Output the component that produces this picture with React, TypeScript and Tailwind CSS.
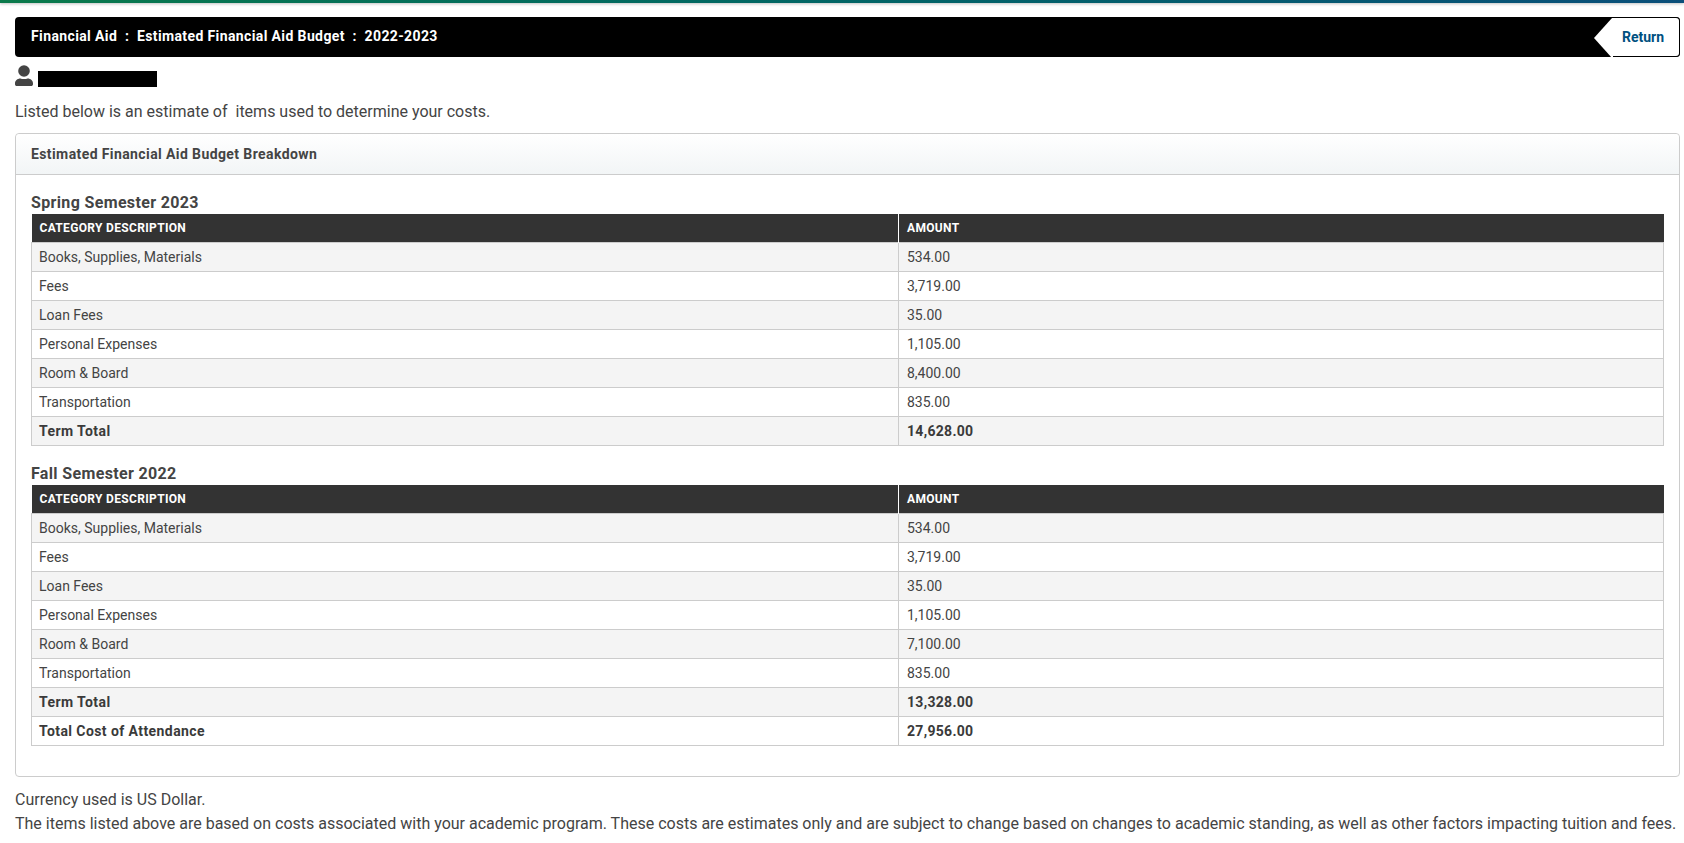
import React from "react";

type Row = { label: string; amount: string; bold?: boolean };

const spring: Row[] = [
  { label: "Books, Supplies, Materials", amount: "534.00" },
  { label: "Fees", amount: "3,719.00" },
  { label: "Loan Fees", amount: "35.00" },
  { label: "Personal Expenses", amount: "1,105.00" },
  { label: "Room & Board", amount: "8,400.00" },
  { label: "Transportation", amount: "835.00" },
  { label: "Term Total", amount: "14,628.00", bold: true },
];

const fall: Row[] = [
  { label: "Books, Supplies, Materials", amount: "534.00" },
  { label: "Fees", amount: "3,719.00" },
  { label: "Loan Fees", amount: "35.00" },
  { label: "Personal Expenses", amount: "1,105.00" },
  { label: "Room & Board", amount: "7,100.00" },
  { label: "Transportation", amount: "835.00" },
  { label: "Term Total", amount: "13,328.00", bold: true },
  { label: "Total Cost of Attendance", amount: "27,956.00", bold: true },
];

function BudgetTable({ title, rows }: { title: string; rows: Row[] }) {
  return (
    <section>
      <h3 className="text-[16px] leading-[19px] font-bold tracking-[0.35px] text-[#444444] mb-[2px]">{title}</h3>
      <table className="w-full border-collapse table-fixed text-[14px]">
        <colgroup>
          <col className="w-[867px]" />
          <col />
        </colgroup>
        <thead>
          <tr className="bg-[#333333] text-white h-[28px]">
            <th className="text-left font-bold text-[12px] tracking-[0.33px] uppercase px-2 py-0 border-r border-white">Category Description</th>
            <th className="text-left font-bold text-[12px] tracking-[0.33px] uppercase px-2 py-0">Amount</th>
          </tr>
        </thead>
        <tbody>
          {rows.map((r, i) => (
            <tr key={r.label} className={`h-[29px] ${i % 2 === 0 ? "bg-[#f4f4f4]" : "bg-white"} ${r.bold ? "font-bold text-[#3a3a3a]" : "text-[#444444]"}`}>
              <td className={`border border-[#cccccc] pl-[7px] pr-2 pt-[1px] pb-0 ${r.bold ? "tracking-[0.42px]" : ""}`}>{r.label}</td>
              <td className={`border border-[#cccccc] px-2 pt-[1px] pb-0 ${r.bold ? "tracking-[0.3px]" : ""}`}>{r.amount}</td>
            </tr>
          ))}
        </tbody>
      </table>
    </section>
  );
}

export default function App() {
  return (
    <div className="min-h-[843px] bg-white text-[#444444] text-[16px] font-['Roboto',sans-serif]">
      <div className="h-[3px] bg-gradient-to-r from-[#0b7a4b] to-[#0b4f7a] shadow-[0_1px_3px_rgba(0,0,0,0.25)]" />
      <div className="pt-[14px] pl-[15px] pr-[4px]">
        <div className="h-[40px] bg-black rounded-[4px] flex items-center justify-between">
          <div className="pl-4 pb-[1px] text-white text-[14px] font-bold tracking-[0.38px] whitespace-pre">
            Financial Aid  :  Estimated Financial Aid Budget  :  2022-2023
          </div>
          <div className="relative h-[40px] w-[68px] bg-white border border-black rounded-r-[4px] border-l-0 flex items-center justify-end pr-[15px] text-[14px] font-bold text-[#00507f]">
            <svg className="absolute left-[-18px] top-0" width="19" height="40" viewBox="0 0 19 40">
              <path d="M19 0 L18 0 L0 20 L18 40 L19 40 Z" fill="#ffffff" />
            </svg>
            Return
          </div>
        </div>

        <div className="flex items-end h-[22px] mt-[8px]">
          <svg width="18" height="21" viewBox="0 0 18 21" fill="#444444" className="mb-[1px]">
            <circle cx="9" cy="6" r="5.8" />
            <path d="M5.5 13.4 C7 14.3 11 14.3 12.5 13.4 C15.8 13.4 18 15.6 18 18.6 V19.2 C18 20.2 17.2 21 16.2 21 H1.8 C0.8 21 0 20.2 0 19.2 V18.6 C0 15.6 2.2 13.4 5.5 13.4 Z" />
          </svg>
          <div className="ml-[5px] w-[119px] h-[16px] bg-black" />
        </div>

        <p className="mt-[13px] leading-[24px] whitespace-pre">Listed below is an estimate of  items used to determine your costs.</p>

        <div className="mt-[9px] border border-[#cccccc] rounded-[4px] h-[644px]">
          <div className="h-[41px] flex items-center px-[15px] text-[14px] font-bold tracking-[0.4px] text-[#444444] border-b border-[#cccccc] bg-gradient-to-b from-white to-[#f2f5f6] rounded-t-[4px]">
            Estimated Financial Aid Budget Breakdown
          </div>
          <div className="px-[15px] pt-[18px] flex flex-col gap-[18.5px]">
            <BudgetTable title="Spring Semester 2023" rows={spring} />
            <BudgetTable title="Fall Semester 2022" rows={fall} />
          </div>
        </div>

        <p className="mt-[11px] leading-[24px]">Currency used is US Dollar.</p>
        <p className="leading-[24px] whitespace-nowrap">
          The items listed above are based on costs associated with your academic program. These costs are estimates only and are subject to change based on changes to academic standing, as well as other factors impacting tuition and fees.
        </p>
      </div>
    </div>
  );
}
